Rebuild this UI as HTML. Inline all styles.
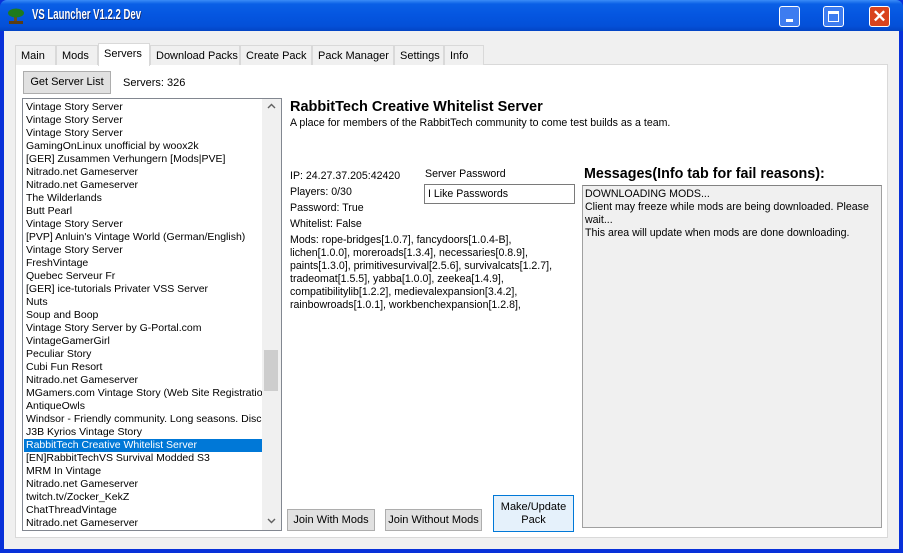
<!DOCTYPE html>
<html><head><meta charset="utf-8"><style>
*{margin:0;padding:0;box-sizing:border-box}
body{width:903px;height:553px;overflow:hidden;font-family:"Liberation Sans",sans-serif;font-size:10.5px;color:#000;position:relative;background:#0831d9}
.a{position:absolute;white-space:nowrap}
#title{left:0;top:0;width:903px;height:31px;background:linear-gradient(#3b8cf7 0,#0a5fe6 4px,#0556e0 15px,#0450d8 26px,#0344c4 31px);border-radius:7px 7px 0 0}
#client{left:4px;top:31px;width:895px;height:518px;background:#f0f0f0}
.tb{top:6px;width:21px;height:21px;border:1px solid #fff;border-radius:3px}
.tab{top:45px;height:20px;border:1px solid #d9d9d9;border-bottom:none;background:#f0f0f0;padding:4px 0 0 5px;font-size:11px}
.btn{background:#e1e1e1;border:1px solid #adadad;font-size:11px;text-align:center}
#list div{height:13px;line-height:13px;padding-left:2px;font-size:10.5px}
</style></head><body>
<div class="a" id="title"></div>
<svg class="a" style="left:7px;top:7px" width="18" height="18"><rect x="7" y="8" width="3" height="8" fill="#6b4a1e"/><ellipse cx="9" cy="6" rx="8" ry="4.5" fill="#1e7a1e"/><rect x="2" y="14" width="14" height="3" fill="#5a3d14"/></svg>
<div class="a" style="left:32px;top:7px;color:#fff;font-weight:bold;font-size:14.5px;text-shadow:1px 1px #0a246a;transform:scaleX(0.66);transform-origin:left">VS Launcher V1.2.2 Dev</div>
<div class="a tb" style="left:779px;background:#3d7cf0"><div class="a" style="left:6px;top:12px;width:7px;height:3px;background:#fff"></div></div>
<div class="a tb" style="left:823px;background:#3d7cf0"><div class="a" style="left:4px;top:4px;width:11px;height:11px;border:1px solid #fff;border-top-width:3px"></div></div>
<div class="a tb" style="left:869px;background:#d9431e;font-size:17px;color:#fff;text-align:center;line-height:19px;font-weight:bold">✕</div>
<div class="a" id="client"></div>
<div class="a" style="left:15px;top:64px;width:873px;height:474px;background:#fff;border:1px solid #d9d9d9"></div>
<div class="a tab" style="left:15px;width:41px">Main</div>
<div class="a tab" style="left:56px;width:42px">Mods</div>
<div class="a tab" style="left:98px;top:43px;height:23px;width:52px;background:#fff;z-index:2">Servers</div>
<div class="a tab" style="left:150px;width:90px">Download Packs</div>
<div class="a tab" style="left:240px;width:72px">Create Pack</div>
<div class="a tab" style="left:312px;width:82px">Pack Manager</div>
<div class="a tab" style="left:394px;width:50px">Settings</div>
<div class="a tab" style="left:444px;width:40px">Info</div>
<div class="a btn" style="left:23px;top:71px;width:88px;height:23px;line-height:21px">Get Server List</div>
<div class="a" style="left:123px;top:77px;font-size:11px">Servers: 326</div>
<div class="a" style="left:22px;top:98px;width:260px;height:433px;border:1px solid #828790;background:#fff;overflow:hidden">
<div id="list" class="a" style="left:1px;top:2px;width:238px;overflow:hidden">
<div>Vintage Story Server</div><div>Vintage Story Server</div><div>Vintage Story Server</div><div>GamingOnLinux unofficial by woox2k</div><div>[GER] Zusammen Verhungern [Mods|PVE]</div><div>Nitrado.net Gameserver</div><div>Nitrado.net Gameserver</div><div>The Wilderlands</div><div>Butt Pearl</div><div>Vintage Story Server</div><div>[PVP] Anluin's Vintage World (German/English)</div><div>Vintage Story Server</div><div>FreshVintage</div><div>Quebec Serveur Fr</div><div>[GER] ice-tutorials Privater VSS Server</div><div>Nuts</div><div>Soup and Boop</div><div>Vintage Story Server by G-Portal.com</div><div>VintageGamerGirl</div><div>Peculiar Story</div><div>Cubi Fun Resort</div><div>Nitrado.net Gameserver</div><div>MGamers.com Vintage Story (Web Site Registration</div><div>AntiqueOwls</div><div>Windsor - Friendly community. Long seasons. Discord</div><div>J3B Kyrios Vintage Story</div><div style="background:#0078d7;color:#fff">RabbitTech Creative Whitelist Server</div><div>[EN]RabbitTechVS Survival Modded S3</div><div>MRM In Vintage</div><div>Nitrado.net Gameserver</div><div>twitch.tv/Zocker_KekZ</div><div>ChatThreadVintage</div><div>Nitrado.net Gameserver</div>
</div>
<div class="a" style="left:239px;top:0;width:19px;height:431px;background:#f0f0f0"></div>
<div class="a" style="left:241px;top:251px;width:14px;height:41px;background:#cdcdcd"></div>
<svg class="a" style="left:244px;top:4px" width="9" height="6"><path d="M1 5 L4.5 1.5 L8 5" stroke="#606060" stroke-width="1.4" fill="none"/></svg>
<svg class="a" style="left:244px;top:419px" width="9" height="6"><path d="M1 1 L4.5 4.5 L8 1" stroke="#606060" stroke-width="1.4" fill="none"/></svg>
</div>
<div class="a" style="left:290px;top:99px;font-weight:bold;font-size:14.5px">RabbitTech Creative Whitelist Server</div>
<div class="a" style="left:290px;top:117px;font-size:10.6px">A place for members of the RabbitTech community to come test builds as a team.</div>
<div class="a" style="left:290px;top:168px;font-size:10.6px;line-height:16px">IP: 24.27.37.205:42420<br>Players: 0/30<br>Password: True<br>Whitelist: False</div>
<div class="a" style="left:290px;top:234px;font-size:10.6px;line-height:13px">Mods: rope-bridges[1.0.7], fancydoors[1.0.4-B],<br>lichen[1.0.0], moreroads[1.3.4], necessaries[0.8.9],<br>paints[1.3.0], primitivesurvival[2.5.6], survivalcats[1.2.7],<br>tradeomat[1.5.5], yabba[1.0.0], zeekea[1.4.9],<br>compatibilitylib[1.2.2], medievalexpansion[3.4.2],<br>rainbowroads[1.0.1], workbenchexpansion[1.2.8],</div>
<div class="a" style="left:425px;top:168px;font-size:10.6px">Server Password</div>
<div class="a" style="left:424px;top:184px;width:151px;height:20px;border:1px solid #7a7a7a;padding:3px 3px;font-size:10.6px">I Like Passwords</div>
<div class="a" style="left:584px;top:166px;font-weight:bold;font-size:14.3px">Messages(Info tab for fail reasons):</div>
<div class="a" style="left:582px;top:185px;width:300px;height:343px;background:#f0f0f0;border:1px solid #a0a0a0;border-top-color:#828282;padding:2px 2px;font-size:10.6px;line-height:13px">DOWNLOADING MODS...<br>Client may freeze while mods are being downloaded. Please<br>wait...<br>This area will update when mods are done downloading.</div>
<div class="a btn" style="left:287px;top:509px;width:88px;height:22px;line-height:20px">Join With Mods</div>
<div class="a btn" style="left:385px;top:509px;width:97px;height:22px;line-height:20px">Join Without Mods</div>
<div class="a btn" style="left:493px;top:495px;width:81px;height:37px;background:#e5f1fb;border-color:#0078d7;line-height:13px;padding-top:5px;white-space:normal">Make/Update Pack</div>
</body></html>
